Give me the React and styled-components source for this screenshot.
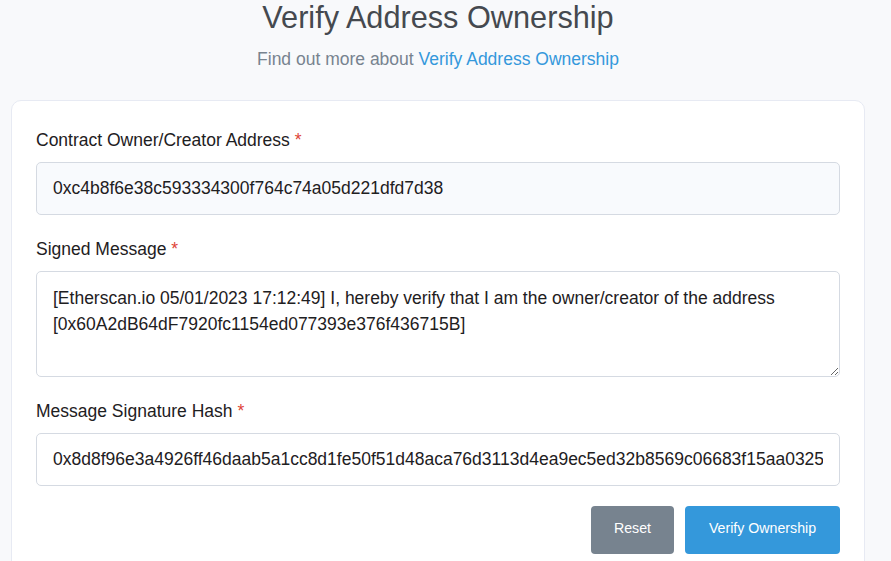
import React, { useState } from 'react';
import styled, { createGlobalStyle } from 'styled-components';

const GlobalStyle = createGlobalStyle`
  html, body {
    margin: 0;
    padding: 0;
    background: #f8f9fb;
    font-family: "Liberation Sans", Arial, sans-serif;
  }
  * { box-sizing: border-box; }
`;

const Page = styled.div`
  width: 854px;
  margin-left: 11px;
  padding-bottom: 40px;
`;

const Header = styled.header`
  text-align: center;
`;

const Title = styled.h1`
  margin: 0;
  font-size: 30.7px;
  line-height: 35px;
  font-weight: 400;
  color: #45494f;
`;

const Subtitle = styled.p`
  margin: 9px 0 0;
  font-size: 17.5px;
  line-height: 30px;
  color: #77838f;

  a {
    color: #3498db;
    text-decoration: none;
  }
`;

const Card = styled.form`
  margin-top: 26px;
  background: #fff;
  border: 1px solid #e7eaf3;
  border-radius: 10px;
  padding: 27px 24px 30px;
  display: flex;
  flex-direction: column;
`;

const Field = styled.div`
  display: flex;
  flex-direction: column;
  margin-bottom: 22px;
`;

const Label = styled.label`
  font-size: 17.5px;
  line-height: 24px;
  color: #1e2022;
  margin-bottom: 10px;

  span {
    color: #de4437;
  }
`;

const Input = styled.input`
  height: 53px;
  padding: 0 16px;
  font-family: inherit;
  font-size: 17.5px;
  color: #1e2022;
  background: ${(p) => (p.readOnly ? '#f8fafd' : '#fff')};
  border: 1px solid #d5dae2;
  border-radius: 5px;
  outline: none;
`;

const TextArea = styled.textarea`
  height: 106px;
  padding: 13px 16px;
  font-family: inherit;
  font-size: 17.5px;
  line-height: 26px;
  color: #1e2022;
  background: #fff;
  border: 1px solid #d5dae2;
  border-radius: 5px;
  outline: none;
  resize: vertical;
`;

const Actions = styled.div`
  display: flex;
  justify-content: flex-end;
  gap: 11px;
  margin-top: -2px;
`;

const Button = styled.button`
  width: ${(p) => (p.$primary ? '155px' : '83px')};
  height: 48px;
  padding: 0 0 4px;
  font-family: inherit;
  font-size: 14.2px;
  color: #fff;
  border: none;
  border-radius: 4px;
  background: ${(p) => (p.$primary ? '#3498db' : '#77838f')};
  cursor: pointer;
`;

const message =
  '[Etherscan.io 05/01/2023 17:12:49] I, hereby verify that I am the owner/creator of the address [0x60A2dB64dF7920fc1154ed077393e376f436715B]';

export default function App() {
  const [signature, setSignature] = useState(
    '0x8d8f96e3a4926ff46daab5a1cc8d1fe50f51d48aca76d3113d4ea9ec5ed32b8569c06683f15aa0325'
  );
  const [msg, setMsg] = useState(message);

  return (
    <>
      <GlobalStyle />
      <Page>
        <Header>
          <Title>Verify Address Ownership</Title>
          <Subtitle>
            Find out more about <a href="#">Verify Address Ownership</a>
          </Subtitle>
        </Header>
        <Card onSubmit={(e) => e.preventDefault()}>
          <Field>
            <Label>
              Contract Owner/Creator Address <span>*</span>
            </Label>
            <Input readOnly value="0xc4b8f6e38c593334300f764c74a05d221dfd7d38" />
          </Field>
          <Field>
            <Label>
              Signed Message <span>*</span>
            </Label>
            <TextArea value={msg} onChange={(e) => setMsg(e.target.value)} />
          </Field>
          <Field>
            <Label>
              Message Signature Hash <span>*</span>
            </Label>
            <Input value={signature} onChange={(e) => setSignature(e.target.value)} />
          </Field>
          <Actions>
            <Button type="reset">Reset</Button>
            <Button type="submit" $primary>
              Verify Ownership
            </Button>
          </Actions>
        </Card>
      </Page>
    </>
  );
}
